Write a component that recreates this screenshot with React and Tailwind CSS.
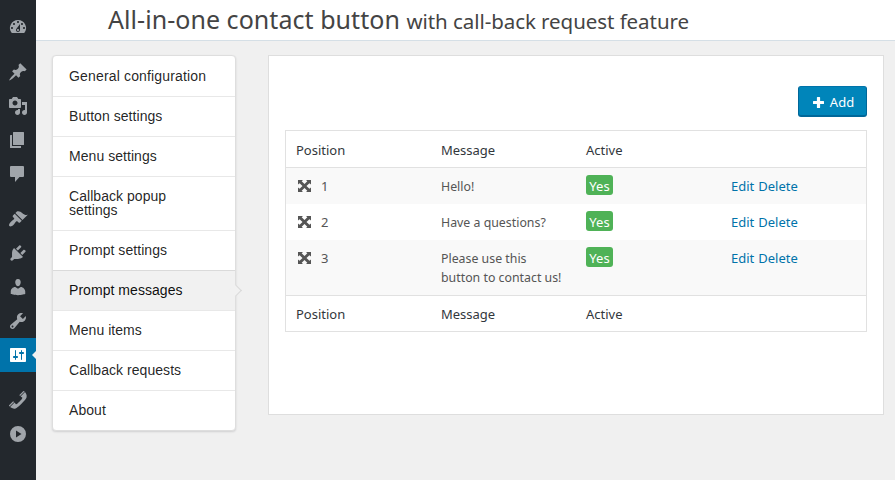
const icons = {
  dashboard:
    "M3.76 16h12.48A7.998 7.998 0 0 0 10 3a7.998 7.998 0 0 0-6.24 13zM10 4c.55 0 1 .45 1 1s-.45 1-1 1-1-.45-1-1 .45-1 1-1zM6 6c.55 0 1 .45 1 1s-.45 1-1 1-1-.45-1-1 .45-1 1-1zm8 0c.55 0 1 .45 1 1s-.45 1-1 1-1-.45-1-1 .45-1 1-1zm-5.37 5.55L12 7v6c0 1.1-.9 2-2 2s-2-.9-2-2c0-.57.24-1.08.63-1.45zM4 10c.55 0 1 .45 1 1s-.45 1-1 1-1-.45-1-1 .45-1 1-1zm12 0c.55 0 1 .45 1 1s-.45 1-1 1-1-.45-1-1 .45-1 1-1zm-5 3c0-.55-.45-1-1-1s-1 .45-1 1 .45 1 1 1 1-.45 1-1z",
  pin: "M10.44 3.02l1.82-1.82 6.36 6.35-1.83 1.82c-1.05-.68-2.48-.57-3.41.36l-.75.75c-.92.93-1.04 2.35-.35 3.41l-1.83 1.82-2.41-2.41-2.8 2.79c-.42.42-3.38 2.71-3.8 2.29s1.86-3.39 2.28-3.81l2.79-2.79L4.1 9.36l1.83-1.82c1.05.69 2.48.57 3.4-.36l.75-.75c.93-.92 1.05-2.35.36-3.41z",
  media:
    "M13 11V4c0-.55-.45-1-1-1h-1.67L9 1H5L3.67 3H2c-.55 0-1 .45-1 1v7c0 .55.45 1 1 1h10c.55 0 1-.45 1-1zM7 4.5c1.38 0 2.5 1.12 2.5 2.5S8.38 9.5 7 9.5 4.5 8.38 4.5 7 5.62 4.5 7 4.5zM14 6h5v10.5c0 1.38-1.12 2.5-2.5 2.5S14 17.88 14 16.5s1.12-2.5 2.5-2.5c.17 0 .34.02.5.05V9h-3V6zm-4 8.05V13h2v3.5c0 1.38-1.12 2.5-2.5 2.5S7 17.88 7 16.5 8.12 14 9.5 14c.17 0 .34.02.5.05z",
  pages:
    "M5.6 2h9.8q.6 0 .6.6v11.8q0 .6-.6.6H5.6q-.6 0-.6-.6V2.600q0-.6.6-.6zM4 5v11h9v1.400q0 .6-.6.6H2.600q-.6 0-.6-.6V5.600q0-.6.6-.6z",
  comment:
    "M3 2h12q1 0 1 1v9q0 1-1 1h-3.500l-4.500 5v-5H3q-1 0-1-1V3q0-1 1-1z",
  brush:
    "M14.48 11.06L7.41 3.99l1.5-1.5c.5-.56 2.3-.47 3.51.32 1.21.8 1.43 1.28 2.91 2.1 1.18.64 2.45 1.26 4.45.85zm-.71.71L6.7 4.7 4.93 6.47c-.39.39-.39 1.02 0 1.41l1.06 1.06c.39.39.39 1.03 0 1.42-.6.6-1.43 1.11-2.21 1.69-.35.26-.7.53-1.01.84C1.43 14.23.4 16.08 1.4 17.07c.99 1 2.84-.03 4.18-1.36.31-.31.58-.66.85-1.02.57-.78 1.08-1.61 1.69-2.21.39-.39 1.02-.39 1.41 0l1.06 1.06c.39.39 1.02.39 1.41 0z",
  plug: "M13.11 4.36L9.87 7.6 8 5.73l3.24-3.24c.35-.34 1.05-.2 1.56.32.52.51.66 1.21.31 1.55zm-8 1.77l.91-1.12 9.01 9.01-1.19.84c-.71.71-2.63 1.16-3.82 1.16H6.14L4.9 17.26c-.59.59-1.54.59-2.12 0-.59-.58-.59-1.53 0-2.12l1.24-1.24v-3.88c0-1.13.4-3.19 1.09-3.89zm7.26 3.97l3.24-3.24c.34-.35 1.04-.21 1.55.31.52.51.66 1.21.31 1.55l-3.24 3.25z",
  user: "M10 9.25c-2.27 0-2.73-3.44-2.73-3.44C7 4.02 7.82 2 9.97 2c2.16 0 2.98 2.02 2.71 3.81 0 0-.41 3.44-2.68 3.44zm0 2.57L12.72 10c2.39 0 4.52 2.33 4.52 4.53v2.49s-3.65 1.13-7.24 1.13c-3.65 0-7.24-1.13-7.24-1.13v-2.49c0-2.25 1.94-4.48 4.47-4.48z",
  wrench:
    "M16.68 9.77c-1.34 1.34-3.3 1.67-4.95.99l-5.41 6.52c-.99.99-2.59.99-3.58 0s-.99-2.59 0-3.57l6.52-5.42c-.68-1.65-.35-3.61.99-4.95 1.28-1.28 3.12-1.62 4.72-1.06l-2.89 2.89 2.82 2.82 2.86-2.87c.53 1.58.18 3.39-1.08 4.65zM3.81 16.21c.4.39 1.04.39 1.43 0 .4-.4.4-1.04 0-1.43-.39-.4-1.03-.4-1.43 0-.39.39-.39 1.03 0 1.43z",
  settings:
    "M18 16V4c0-.55-.45-1-1-1H3c-.55 0-1 .45-1 1v12c0 .55.45 1 1 1h14c.55 0 1-.45 1-1zM8 11h1c.55 0 1 .45 1 1s-.45 1-1 1H8v1.500c0 .28-.22.5-.5.5s-.5-.22-.5-.5V13H6c-.55 0-1-.45-1-1s.45-1 1-1h1V5.500c0-.28.22-.5.5-.5s.5.22.5.5V11zm5-2h-1c-.55 0-1-.45-1-1s.45-1 1-1h1V5.500c0-.28.22-.5.5-.5s.5.22.5.5V7h1c.55 0 1 .45 1 1s-.45 1-1 1h-1v5.500c0 .28-.22.5-.5.5s-.5-.22-.5-.5V9z",
  phone:
    "M12.06 6l-.21-.2c-.52-.54-.43-.79.08-1.3l2.72-2.75c.81-.82.96-1.21 1.73-.48l.21.2zm.53.45l4.4-4.4c.7.94 2.34 3.47 1.53 5.34-.73 1.67-1.09 1.75-2 3-1.85 2.11-4.18 4.37-6 6.07-1.26.91-1.31 1.33-3 2-1.8.71-4.4-.89-5.38-1.56l4.4-4.4 1.18 1.62c.34.46 1.2-.06 1.8-.66 1.04-1.05 3.18-3.18 4-4.07.59-.59 1.12-1.45.66-1.8zM1.57 16.5l-.21-.21c-.68-.74-.29-.9.52-1.7l2.74-2.72c.51-.49.75-.6 1.27-.11l.2.21z",
  play: "M10 2a8 8 0 1 0 0 16 8 8 0 0 0 0-16zM8 6.500v7L13.500 10z",
};

const groups = [
  ["dashboard"],
  ["pin", "media", "pages", "comment"],
  ["brush", "plug", "user", "wrench", "settings"],
  ["phone", "play"],
];

const menu = [
  "General configuration",
  "Button settings",
  "Menu settings",
  "Callback popup settings",
  "Prompt settings",
  "Prompt messages",
  "Menu items",
  "Callback requests",
  "About",
];

const rows = [
  [1, "Hello!"],
  [2, "Have a questions?"],
  [3, "Please use this button to contact us!"],
];

function AdminBar() {
  return (
    <nav className="flex w-9 shrink-0 flex-col gap-[11px] bg-[#23282d] pt-2.5">
      {groups.map((group) => (
        <div key={group[0]}>
          {group.map((name) => {
            const active = name === "settings";
            return (
              <div
                key={name}
                className={
                  "relative flex h-[34px] items-center justify-center " +
                  (active ? "bg-[#0073aa] text-white" : "text-[#a0a5aa]")
                }
              >
                <svg viewBox="0 0 20 20" className="size-5" fill="currentColor" fillRule="evenodd">
                  <path d={icons[name]} />
                </svg>
                {active && (
                  <span className="absolute top-[13px] right-0 border-4 border-l-0 border-transparent border-r-[#f1f1f1]" />
                )}
              </div>
            );
          })}
        </div>
      ))}
    </nav>
  );
}

function MoveIcon() {
  return (
    <svg viewBox="0 0 13 12" className="mb-px h-3 w-[13px]" fill="currentColor">
      <path d="M0 0h5L3.700 1.300 6.500 4.100 9.300 1.300 8 0h5v4.600L11.400 3.200 8.500 6l2.900 2.800L13 7.400V12H8l1.300-1.300L6.500 7.900 3.700 10.700 5 12H0V7.400l1.600 1.400L4.500 6 1.600 3.200 0 4.600z" />
    </svg>
  );
}

function PlusIcon() {
  return (
    <svg viewBox="0 0 11 11" className="mb-px size-[11px]" fill="currentColor">
      <path d="M4.500 0h2q.6 0 .6.6v3.300h3.300q.6 0 .6.6v2q0 .6-.6.6H7.100v3.300q0 .6-.6.6h-2q-.6 0-.6-.6V7.100H.6Q0 7.100 0 6.500v-2q0-.6.6-.6h3.300V.6q0-.6.6-.6z" />
    </svg>
  );
}

function Labels() {
  return (
    <div className="grid h-full grid-cols-4 items-center text-[13px] text-[#32373c]">
      <span className="pl-2.5">Position</span>
      <span className="pl-2.5">Message</span>
      <span className="pl-2.5">Active</span>
    </div>
  );
}

export default function App() {
  return (
    <div className="flex h-[480px] w-[895px] overflow-hidden bg-[#f0f0f0] font-['Noto_Sans',sans-serif]">
      <AdminBar />
      <div className="flex flex-1 flex-col">
        <header className="flex h-[41px] items-baseline border-b border-[#d5dfe6] bg-white pl-[72px] whitespace-nowrap text-[#444]">
          <h1 className="text-[25px] leading-[38px] tracking-[0.05px]">
            All-in-one contact button <span className="text-[20.5px] tracking-[-0.06px]">with call-back request feature</span>
          </h1>
        </header>
        <div className="flex items-start gap-8 pt-3.5 pl-4">
          <ul className="w-[184px] rounded-[4px] border border-[#dedede] bg-white font-['Liberation_Sans',sans-serif] text-[14px] leading-[14px] tracking-[0.05px] text-black/87 shadow-[0_1px_2px_0_rgba(34,36,38,0.15)]">
            {menu.map((label, i) => {
              const active = label === "Prompt messages";
              return (
                <li
                  key={label}
                  className={
                    "relative pr-10 pb-[13px] pl-4 " +
                    (i ? "border-t pt-3 " : "pt-[13px] whitespace-nowrap tracking-[0.16px] ") +
                    (active ? "border-[#dadada] bg-[#f1f1f1] text-black/95" : "border-[#e8e8e8]")
                  }
                >
                  {label}
                  {active && (
                    <span className="absolute top-[15px] -right-[5px] size-[9px] rotate-45 border-t border-r border-[#d8d8d8] bg-[#f1f1f1]" />
                  )}
                </li>
              );
            })}
          </ul>
          <main className="flex h-[360px] w-[616px] flex-col border border-[#dedede] bg-white px-4 pt-[30px]">
            <button className="flex h-[31px] w-[69px] items-center justify-center gap-1.5 self-end rounded-[3px] border border-b-2 border-[#006799] border-t-[#0073aa] bg-[#0085ba] pt-[3px] pl-[2px] text-[13px] text-white">
              <PlusIcon />
              Add
            </button>
            <section className="mt-[13px] border border-[#e1e1e1] leading-[19px]">
              <div className="h-[37px] border-b border-[#e1e1e1] pt-[2px]">
                <Labels />
              </div>
              {rows.map(([n, message]) => (
                <div
                  key={n}
                  className={
                    "grid grid-cols-4 items-start pt-[9px] pb-2 text-[13px] text-[#555] " +
                    (n % 2 ? "bg-[#f9f9f9]" : "bg-white")
                  }
                >
                  <div className="flex items-center gap-2.5 pl-3">
                    <MoveIcon />
                    {n}
                  </div>
                  <div className="px-2.5 text-[12.35px]">{message}</div>
                  <div className="pl-2.5">
                    <span className="-mt-[2px] flex h-5 w-[27px] items-center justify-center rounded-[3px] bg-[#4fb257] pt-[2px] text-white">
                      Yes
                    </span>
                  </div>
                  <div className="flex gap-1 pl-2.5 text-[#0073aa]">
                    <a>Edit</a>
                    <a>Delete</a>
                  </div>
                </div>
              ))}
              <div className="h-9 border-t border-[#e1e1e1] pt-px">
                <Labels />
              </div>
            </section>
          </main>
        </div>
      </div>
    </div>
  );
}
